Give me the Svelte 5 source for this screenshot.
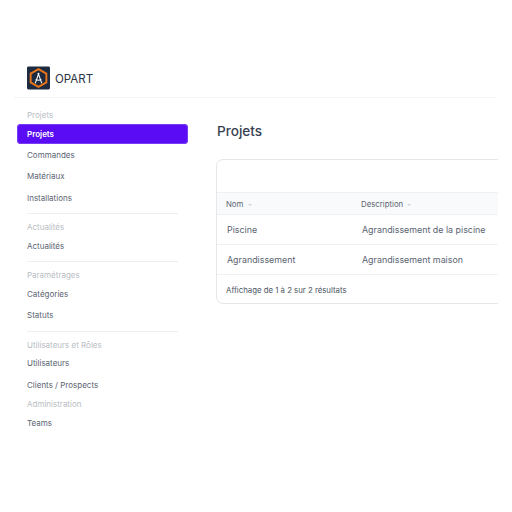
<script>
  const groups = [
    { label: "Projets", items: ["Projets", "Commandes", "Matériaux", "Installations"], divider: true },
    { label: "Actualités", items: ["Actualités"], divider: true },
    { label: "Paramétrages", items: ["Catégories", "Statuts"], divider: true },
    { label: "Utilisateurs et Rôles", items: ["Utilisateurs", "Clients / Prospects"], divider: false },
    { label: "Administration", items: ["Teams"], divider: false },
  ];
  const rows = [
    { name: "Piscine", description: "Agrandissement de la piscine" },
    { name: "Agrandissement", description: "Agrandissement maison" },
  ];
</script>

<div class="page">
  <header class="topbar">
    <svg class="logo" viewBox="0 0 24 24" width="23" height="24">
      <rect width="24" height="24" rx="1.5" fill="#1d2a3f" />
      <path d="M12 2.8 L20.2 7.4 V16.6 L12 21.2 L3.8 16.6 V7.4 Z" fill="none" stroke="#e8751a" stroke-width="2" />
      <circle cx="12" cy="7.6" r="1" fill="#fff" />
      <path d="M12 8 L8.6 17.5 M12 8 L15.4 17.5 M9 13.6 Q12 15 15 13.6" fill="none" stroke="#fff" stroke-width="1.1" />
    </svg>
    <span class="brand">OPART</span>
  </header>

  <div class="body">
    <nav class="sidebar">
      {#each groups as group}
        <div class="label">{group.label}</div>
        <ul>
          {#each group.items as item, i}
            <li class:active={group.label === "Projets" && i === 0}>{item}</li>
          {/each}
        </ul>
        {#if group.divider}
          <hr />
        {:else}
          <div class="gap"></div>
        {/if}
      {/each}
    </nav>

    <main>
      <h1>Projets</h1>
      <section class="card">
        <div class="toolbar"></div>
        <div class="row head">
          <div class="col-name">Nom <i class="caret"></i></div>
          <div>Description <i class="caret"></i></div>
        </div>
        {#each rows as row}
          <div class="row item">
            <div class="col-name">{row.name}</div>
            <div>{row.description}</div>
          </div>
        {/each}
        <div class="foot">Affichage de 1 à 2 sur 2 résultats</div>
      </section>
    </main>
  </div>
</div>

<style>
  :global(body) {
    background: #fff;
    overflow: hidden;
  }

  .page {
    width: 512px;
    height: 512px;
    padding-top: 66px;
    box-sizing: border-box;
    font-family: Inter, "Liberation Sans", sans-serif;
    overflow: hidden;
  }

  .topbar {
    display: flex;
    align-items: center;
    gap: 5px;
    height: 32px;
    box-sizing: border-box;
    margin: 0 15px 0 14px;
    padding: 0 0 7px 13px;
    border-bottom: 1px solid #f3f4f6;
  }

  .logo {
    flex: none;
  }

  .brand {
    margin-top: 1px;
    font-size: 11.5px;
    color: #2b3442;
  }

  .body {
    display: flex;
  }

  .sidebar {
    flex: none;
    width: 171px;
    margin-left: 17px;
    padding-top: 11px;
  }

  .label {
    height: 12px;
    line-height: 12px;
    padding-left: 10px;
    font-size: 8px;
    color: #b9bdc4;
  }

  ul {
    list-style: none;
    margin: 0;
    padding: 2.5px 0 0;
  }

  li {
    height: 21.6px;
    line-height: 21.6px;
    padding-left: 10px;
    font-size: 8px;
    color: #5b6472;
  }

  li.active {
    height: 20px;
    line-height: 20px;
    margin-bottom: 1.4px;
    border-radius: 4px;
    background: #5a0cf5;
    box-shadow: inset 0 0 0 1px #7a3df7;
    color: #fff;
    font-weight: 600;
  }

  hr {
    height: 1px;
    margin: 3.6px 10px 7.2px;
    border: none;
    background: #eceef1;
  }

  .gap {
    height: 1.8px;
  }

  main {
    flex: none;
    width: 282px;
    margin-left: 28px;
    padding-top: 24px;
    overflow: hidden;
  }

  h1 {
    margin: 0 0 18px 1px;
    height: 19px;
    line-height: 19px;
    font-size: 13.6px;
    font-weight: 500;
    color: #374151;
  }

  .card {
    width: 300px;
    height: 145px;
    box-sizing: border-box;
    border: 1px solid #e5e7eb;
    border-radius: 7px;
  }

  .toolbar {
    height: 32px;
  }

  .row {
    display: flex;
    align-items: center;
    border-top: 1px solid #f0f1f3;
    padding-left: 10px;
  }

  .col-name {
    width: 135px;
  }

  .head {
    height: 21px;
    padding-left: 9px;
    background: #f9fafb;
    font-size: 7.8px;
    color: #5b6472;
  }

  .item {
    height: 29px;
    font-size: 8.9px;
    color: #5b6472;
  }

  .caret {
    display: inline-block;
    margin-left: 2px;
    vertical-align: 1px;
    border-left: 2px solid transparent;
    border-right: 2px solid transparent;
    border-top: 2px solid #d1d5db;
  }

  .foot {
    display: flex;
    align-items: center;
    height: 27px;
    padding-top: 1px;
    border-top: 1px solid #f0f1f3;
    padding-left: 9px;
    font-size: 7.8px;
    color: #4b5563;
  }
</style>
